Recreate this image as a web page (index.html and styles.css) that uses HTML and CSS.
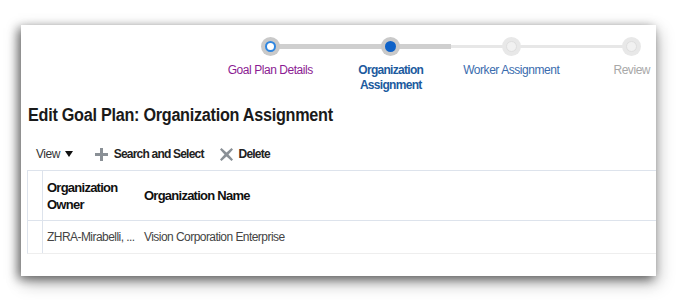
FILE: index.html
```html
<!DOCTYPE html>
<html>
<head>
<meta charset="utf-8">
<link rel="stylesheet" href="styles.css">
</head>
<body>
<div class="card">
  <div class="stepper">
    <div class="step step-done">
      <div class="dot"><span class="inner"></span></div>
      <div class="label visited">Goal Plan Details</div>
    </div>
    <div class="step step-current">
      <div class="dot"><span class="inner"></span></div>
      <div class="label current">Organization<br>Assignment</div>
    </div>
    <div class="step step-next">
      <div class="dot"><span class="inner"></span></div>
      <div class="label link">Worker Assignment</div>
    </div>
    <div class="step step-last">
      <div class="dot"><span class="inner"></span></div>
      <div class="label muted">Review</div>
    </div>
  </div>
  <h1 class="title">Edit Goal Plan: Organization Assignment</h1>
  <div class="toolbar">
    <span class="view">View <span class="caret"></span></span>
    <span class="action">
      <svg class="icon" width="13" height="13" viewBox="0 0 13 13"><path d="M5 0h3v5h5v3H8v5H5V8H0V5h5z" fill="#8a9096"/></svg>
      Search and Select
    </span>
    <span class="action">
      <svg class="icon" width="13" height="13" viewBox="0 0 13 13"><path d="M1.5 0L6.5 4.5 11.5 0 13 1.5 8.5 6.5 13 11.5 11.5 13 6.5 8.5 1.5 13 0 11.5 4.5 6.5 0 1.5z" fill="#8a9096"/></svg>
      Delete
    </span>
  </div>
  <div class="table">
    <div class="row head">
      <div class="cell sel"></div>
      <div class="cell owner">Organization<br>Owner</div>
      <div class="cell name">Organization Name</div>
    </div>
    <div class="row data">
      <div class="cell sel"></div>
      <div class="cell owner">ZHRA-Mirabelli, ...</div>
      <div class="cell name">Vision Corporation Enterprise</div>
    </div>
  </div>
</div>
</body>
</html>
```

FILE: styles.css
```css
html, body {
  margin: 0;
  padding: 0;
  background: #ffffff;
}
body {
  font-family: "Liberation Sans", Arial, sans-serif;
  width: 680px;
  height: 300px;
  overflow: hidden;
}
.card {
  margin: 25px 0 0 21px;
  width: 635px;
  height: 251px;
  background: #fff;
  box-shadow: -3px 3px 10px rgba(0,0,0,0.55), 2px 7px 16px rgba(0,0,0,0.25);
  box-sizing: border-box;
  padding-top: 12px;
}
.stepper {
  display: flex;
  margin-left: 189px;
  width: 482px;
}
.step {
  width: 120.5px;
  flex: none;
  display: flex;
  flex-direction: column;
  align-items: center;
  position: relative;
}
.step::before, .step::after {
  content: "";
  position: absolute;
  top: 7px;
  height: 5px;
  width: 50%;
  background: #cfcfcf;
  z-index: 0;
}
.step::before { left: 0; }
.step::after { right: 0; }
.step-done::before { display: none; }
.step-next::before, .step-next::after, .step-last::before {
  background: #e7e7e7;
  top: 8px;
  height: 3px;
}
.step-last::after { display: none; }
.dot {
  position: relative;
  z-index: 1;
  width: 19px;
  height: 19px;
  border-radius: 50%;
  background: #c9c9c9;
  display: flex;
  align-items: center;
  justify-content: center;
}
.inner {
  width: 11px;
  height: 11px;
  border-radius: 50%;
  box-sizing: border-box;
}
.step-done .inner {
  background: #fff;
  border: 2px solid #2f86e0;
}
.step-current .inner {
  background: #0f62c8;
}
.step-next .dot, .step-last .dot {
  background: #e8e8e8;
}
.step-next .inner, .step-last .inner {
  background: #f1f1f1;
  border: 1px solid #dedede;
}
.label {
  margin-top: 7px;
  font-size: 12px;
  line-height: 15px;
  text-align: center;
  letter-spacing: -0.45px;
  white-space: nowrap;
}
.visited { color: #8b1c93; }
.current { color: #1d5b9e; font-weight: bold; letter-spacing: -0.7px; }
.link { color: #3a6cae; }
.muted { color: #a8a8a8; }
.title {
  margin: 11px 0 0 7px;
  font-size: 18px;
  line-height: 22px;
  font-weight: bold;
  color: #1a1a1a;
  letter-spacing: -0.3px;
  transform: scaleX(0.9);
  transform-origin: left center;
  white-space: nowrap;
}
.toolbar {
  display: flex;
  align-items: center;
  gap: 16px;
  margin: 19px 0 0 15px;
  height: 18px;
  font-size: 12px;
  color: #222;
  letter-spacing: -0.8px;
}
.view {
  display: flex;
  align-items: center;
  color: #333;
  margin-right: 6px;
  letter-spacing: -0.5px;
}
.caret {
  width: 0;
  height: 0;
  border-left: 4px solid transparent;
  border-right: 4px solid transparent;
  border-top: 6px solid #111;
  margin-left: 5px;
}
.action {
  display: flex;
  align-items: center;
  gap: 6px;
  font-weight: bold;
}
.table {
  margin: 7px 0 0 6px;
  border-top: 1px solid #dde3ec;
  border-left: 1px solid #dde3ec;
  border-bottom: 1px solid #eeeeee;
}
.row {
  display: flex;
  border-bottom: 1px solid #dde3ec;
}
.row:last-child { border-bottom: none; }
.cell {
  display: flex;
  align-items: center;
}
.sel {
  width: 14px;
  border-right: 1px solid #dde3ec;
  flex: none;
}
.owner {
  width: 97px;
  padding-left: 4px;
  flex: none;
}
.name { flex: 1; }
.head { height: 49px; }
.head .cell {
  font-size: 13px;
  line-height: 17px;
  font-weight: bold;
  color: #111;
  letter-spacing: -0.75px;
}
.data { height: 32px; }
.data .cell {
  font-size: 12px;
  color: #444;
  letter-spacing: -0.55px;
}
```
